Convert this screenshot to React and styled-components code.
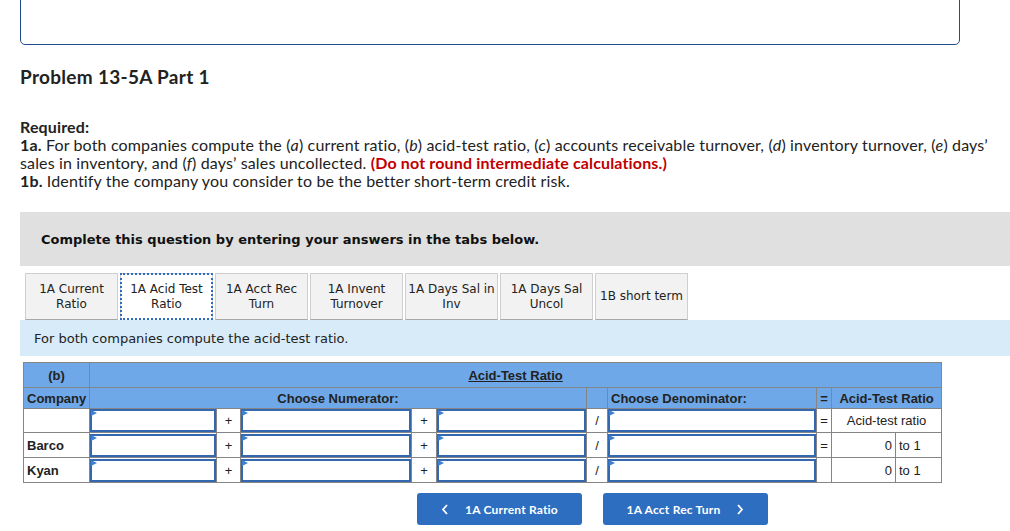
import React from "react";
import styled, { createGlobalStyle } from "styled-components";

const Global = createGlobalStyle`
  html, body {
    margin: 0;
    padding: 0;
    background: #fff;
    overflow: hidden;
  }
  body {
    font-family: Lato, "Liberation Sans", sans-serif;
    color: #222;
  }
`;

const Page = styled.div`
  padding-left: 20px;
  width: 990px;
`;

const AnswerBox = styled.div`
  width: 940px;
  height: 60px;
  margin-top: -15px;
  border: 1.5px solid #1f4e8c;
  border-radius: 5px;
  box-sizing: border-box;
`;

const Title = styled.h2`
  margin: 21px 0 0;
  font-size: 19px;
  font-weight: 700;
  letter-spacing: 0.3px;
  line-height: 22px;
  color: #222;
`;

const Required = styled.div`
  margin-top: 30px;
  font-size: 16px;
  letter-spacing: 0.15px;
  line-height: 18px;
  color: #222;
`;

const Red = styled.b`
  color: #c00000;
`;

const Notice = styled.div`
  margin-top: 22px;
  height: 54px;
  background: #e0e0e0;
  display: flex;
  align-items: center;
  padding-left: 21px;
  font-family: "DejaVu Sans", Verdana, sans-serif;
  font-weight: 700;
  font-size: 13px;
  color: #111;
`;

const Tabs = styled.div`
  display: flex;
  gap: 2px;
  margin-top: 7px;
  padding-left: 5px;
`;

const Tab = styled.div`
  width: 93px;
  height: 47px;
  box-sizing: border-box;
  display: flex;
  align-items: center;
  justify-content: center;
  text-align: center;
  font-family: "DejaVu Sans", Verdana, sans-serif;
  font-size: 12px;
  line-height: 15px;
  color: #222;
  background: ${(p) => (p.$active ? "#fff" : "#f2f2f2")};
  border: 1px solid #cfcfcf;
  border-bottom: ${(p) => (p.$active ? "none" : "1px solid #a8a8a8")};
  outline: ${(p) => (p.$active ? "2px dotted #2d6cc4" : "none")};
  outline-offset: -2px;
`;

const Prompt = styled.div`
  height: 36px;
  background: #d8ebf9;
  display: flex;
  align-items: center;
  padding-left: 14px;
  font-family: "DejaVu Sans", Verdana, sans-serif;
  font-size: 13px;
  color: #222;
`;

const Table = styled.table`
  margin: 6px 0 0 3px;
  border-collapse: collapse;
  table-layout: fixed;
  width: 918px;
  font-family: "Liberation Sans", Arial, sans-serif;
  font-size: 13px;
  color: #222;
`;

const Cell = styled.td`
  border: 1px solid #858585;
  padding: 0 3px;
  height: ${(p) => p.$h || 23}px;
  text-align: ${(p) => p.$align || "left"};
  font-weight: ${(p) => (p.$bold ? 700 : 400)};
  background: ${(p) => (p.$head ? "#6ea8e8" : "#fff")};
  white-space: nowrap;
  overflow: hidden;
`;

const InputCell = styled.td`
  border: 1px solid #858585;
  padding: 0;
  height: 23px;
  background: #fff;
`;

const Dropdown = styled.div`
  position: relative;
  height: 23px;
  box-sizing: border-box;
  border: 2px solid #3367b0;
  background: #fff;

  &::before {
    content: "";
    position: absolute;
    left: -1px;
    top: -1px;
    border-top: 3.5px solid transparent;
    border-bottom: 3.5px solid transparent;
    border-left: 6px solid #3a80d4;
  }
`;

const Underline = styled.span`
  text-decoration: underline;
`;

const Nav = styled.div`
  display: flex;
  gap: 21px;
  margin: 10px 0 0 397px;
`;

const NavButton = styled.button`
  width: 165px;
  height: 32px;
  border: none;
  border-radius: 3px;
  background: #2d6ec0;
  color: #fff;
  font-family: Lato, "Liberation Sans", sans-serif;
  font-weight: 700;
  font-size: 12px;
  letter-spacing: 0.2px;
  display: flex;
  align-items: center;
  justify-content: center;
  gap: 16px;
  cursor: pointer;
`;

const Chevron = ({ dir }) => (
  <svg width="8" height="11" viewBox="0 0 8 11" aria-hidden="true">
    <path
      d={dir === "left" ? "M6 1 L2 5.5 L6 10" : "M2 1 L6 5.5 L2 10"}
      fill="none"
      stroke="#fff"
      strokeWidth="1.8"
    />
  </svg>
);

const tabs = [
  ["1A Current", "Ratio"],
  ["1A Acid Test", "Ratio"],
  ["1A Acct Rec", "Turn"],
  ["1A Invent", "Turnover"],
  ["1A Days Sal in", "Inv"],
  ["1A Days Sal", "Uncol"],
  ["1B short term"],
];

const widths = [66, 127, 24, 171, 25, 150, 21, 209, 15, 64, 46];

function DataRow({ name, h, eq, value }) {
  return (
    <tr>
      <Cell $h={h} $bold>{name}</Cell>
      <InputCell><Dropdown /></InputCell>
      <Cell $h={h} $align="center">+</Cell>
      <InputCell><Dropdown /></InputCell>
      <Cell $h={h} $align="center">+</Cell>
      <InputCell><Dropdown /></InputCell>
      <Cell $h={h} $align="center">/</Cell>
      <InputCell><Dropdown /></InputCell>
      <Cell $h={h} $align="center">{eq ? "=" : ""}</Cell>
      {value === undefined ? (
        <Cell $h={h} colSpan={2} $align="center">Acid-test ratio</Cell>
      ) : (
        <>
          <Cell $h={h} $align="right">{value}</Cell>
          <Cell $h={h}>to 1</Cell>
        </>
      )}
    </tr>
  );
}

export default function App() {
  return (
    <Page>
      <Global />
      <AnswerBox />
      <Title>Problem 13-5A Part 1</Title>
      <Required>
        <b>Required:</b>
        <br />
        <b>1a.</b> For both companies compute the (<i>a</i>) current ratio, (<i>b</i>)
        acid-test ratio, (<i>c</i>) accounts receivable turnover, (<i>d</i>) inventory
        turnover, (<i>e</i>) days’ sales in inventory, and (<i>f</i>) days’ sales
        uncollected. <Red>(Do not round intermediate calculations.)</Red>
        <br />
        <b>1b.</b> Identify the company you consider to be the better short-term credit risk.
      </Required>
      <Notice>Complete this question by entering your answers in the tabs below.</Notice>
      <Tabs>
        {tabs.map((t, i) => (
          <Tab key={i} $active={i === 1}>
            <span>
              {t[0]}
              {t[1] && (
                <>
                  <br />
                  {t[1]}
                </>
              )}
            </span>
          </Tab>
        ))}
      </Tabs>
      <Prompt>For both companies compute the acid-test ratio.</Prompt>
      <Table>
        <colgroup>
          {widths.map((w, i) => (
            <col key={i} style={{ width: w }} />
          ))}
        </colgroup>
        <tbody>
          <tr>
            <Cell $head $bold $h={24} $align="center">(b)</Cell>
            <Cell $head $bold $h={24} $align="center" colSpan={10}>
              <Underline>Acid-Test Ratio</Underline>
            </Cell>
          </tr>
          <tr>
            <Cell $head $bold $h={20} $align="center">Company</Cell>
            <Cell $head $bold $h={20} $align="center" colSpan={5}>Choose Numerator:</Cell>
            <Cell $head $h={20} />
            <Cell $head $bold $h={20}>Choose Denominator:</Cell>
            <Cell $head $bold $h={20} $align="center">=</Cell>
            <Cell $head $bold $h={20} $align="center" colSpan={2}>Acid-Test Ratio</Cell>
          </tr>
          <DataRow name="" h={23} eq />
          <DataRow name="Barco" h={24} eq value="0" />
          <DataRow name="Kyan" h={24} value="0" />
        </tbody>
      </Table>
      <Nav>
        <NavButton type="button">
          <Chevron dir="left" />
          1A Current Ratio
        </NavButton>
        <NavButton type="button">
          1A Acct Rec Turn
          <Chevron dir="right" />
        </NavButton>
      </Nav>
    </Page>
  );
}
